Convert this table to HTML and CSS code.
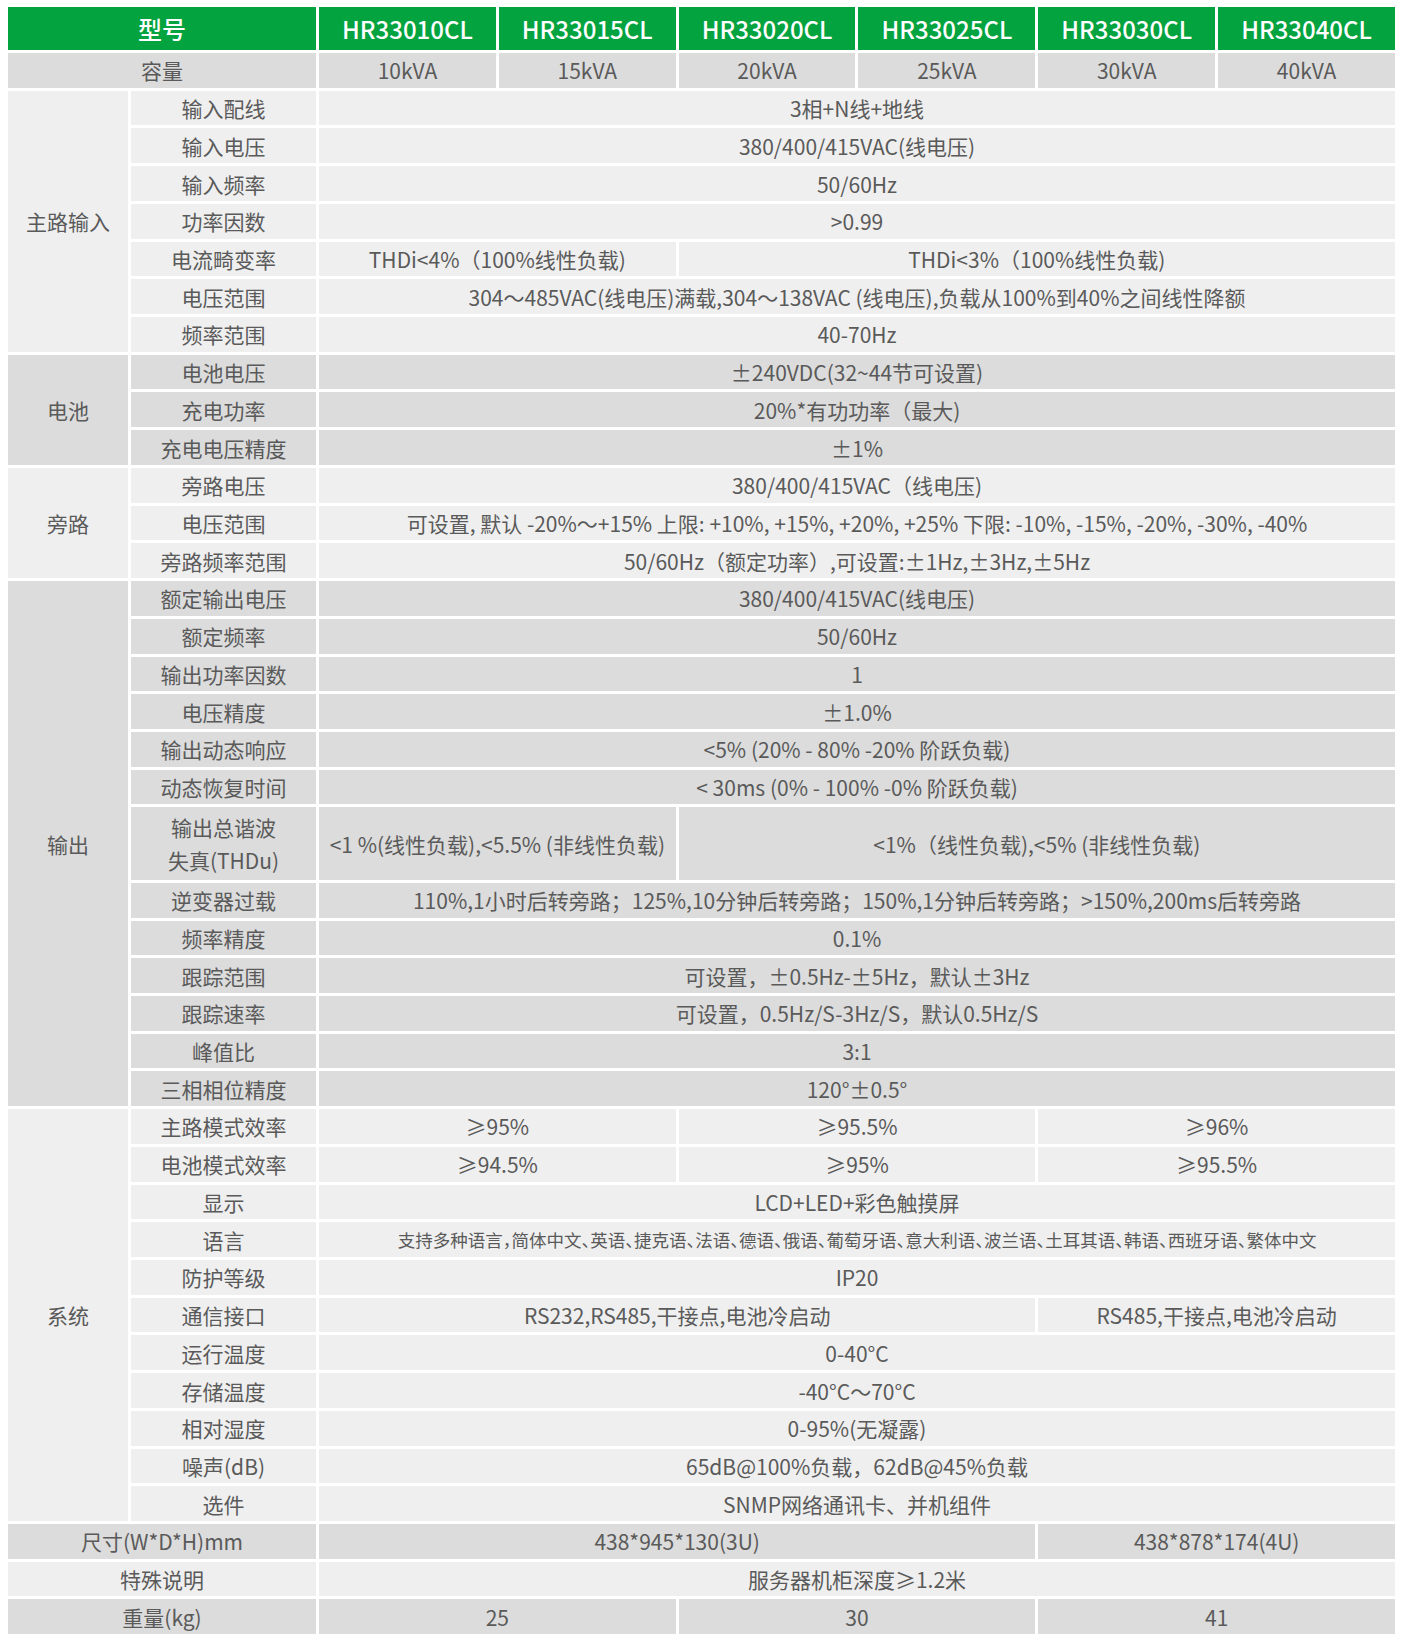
FILE: index.html
```html
<!DOCTYPE html>
<html lang="zh-CN">
<head>
<meta charset="utf-8">
<title>HR330 系列参数</title>
<link rel="stylesheet" href="styles.css">
</head>
<body>
<table class="spec">
  <colgroup>
    <col class="c-group"><col class="c-sub">
    <col class="c-val"><col class="c-val"><col class="c-val"><col class="c-val"><col class="c-val"><col class="c-val">
  </colgroup>
  <thead>
    <tr class="head">
      <th colspan="2">型号</th>
      <th>HR33010CL</th><th>HR33015CL</th><th>HR33020CL</th><th>HR33025CL</th><th>HR33030CL</th><th>HR33040CL</th>
    </tr>
  </thead>
  <tbody>
    <tr class="dark">
      <td colspan="2">容量</td>
      <td>10kVA</td><td>15kVA</td><td>20kVA</td><td>25kVA</td><td>30kVA</td><td>40kVA</td>
    </tr>

    <tr class="light"><td rowspan="7">主路输入</td><td>输入配线</td><td colspan="6">3相+N线+地线</td></tr>
    <tr class="light"><td>输入电压</td><td colspan="6">380/400/415VAC(线电压)</td></tr>
    <tr class="light"><td>输入频率</td><td colspan="6">50/60Hz</td></tr>
    <tr class="light"><td>功率因数</td><td colspan="6">&gt;0.99</td></tr>
    <tr class="light"><td>电流畸变率</td><td colspan="2">THDi&lt;4%（100%线性负载)</td><td colspan="4">THDi&lt;3%（100%线性负载)</td></tr>
    <tr class="light"><td>电压范围</td><td colspan="6">304～485VAC(线电压)满载,304～138VAC (线电压),负载从100%到40%之间线性降额</td></tr>
    <tr class="light"><td>频率范围</td><td colspan="6">40-70Hz</td></tr>

    <tr class="dark"><td rowspan="3">电池</td><td>电池电压</td><td colspan="6">±240VDC(32~44节可设置)</td></tr>
    <tr class="dark"><td>充电功率</td><td colspan="6">20%*有功功率（最大)</td></tr>
    <tr class="dark"><td>充电电压精度</td><td colspan="6">±1%</td></tr>

    <tr class="light"><td rowspan="3">旁路</td><td>旁路电压</td><td colspan="6">380/400/415VAC（线电压)</td></tr>
    <tr class="light"><td>电压范围</td><td colspan="6">可设置, 默认 -20%～+15% 上限: +10%, +15%, +20%, +25% 下限: -10%, -15%, -20%, -30%, -40%</td></tr>
    <tr class="light"><td>旁路频率范围</td><td colspan="6">50/60Hz（额定功率）,可设置:±1Hz,±3Hz,±5Hz</td></tr>

    <tr class="dark"><td rowspan="13">输出</td><td>额定输出电压</td><td colspan="6">380/400/415VAC(线电压)</td></tr>
    <tr class="dark"><td>额定频率</td><td colspan="6">50/60Hz</td></tr>
    <tr class="dark"><td>输出功率因数</td><td colspan="6">1</td></tr>
    <tr class="dark"><td>电压精度</td><td colspan="6">±1.0%</td></tr>
    <tr class="dark"><td>输出动态响应</td><td colspan="6">&lt;5% (20% - 80% -20% 阶跃负载)</td></tr>
    <tr class="dark"><td>动态恢复时间</td><td colspan="6">&lt; 30ms (0% - 100% -0% 阶跃负载)</td></tr>
    <tr class="dark tall"><td class="two">输出总谐波<br>失真(THDu)</td><td colspan="2">&lt;1 %(线性负载),&lt;5.5% (非线性负载)</td><td colspan="4">&lt;1%（线性负载),&lt;5% (非线性负载)</td></tr>
    <tr class="dark"><td>逆变器过载</td><td colspan="6">110%,1小时后转旁路；125%,10分钟后转旁路；150%,1分钟后转旁路；&gt;150%,200ms后转旁路</td></tr>
    <tr class="dark"><td>频率精度</td><td colspan="6">0.1%</td></tr>
    <tr class="dark"><td>跟踪范围</td><td colspan="6">可设置，±0.5Hz-±5Hz，默认±3Hz</td></tr>
    <tr class="dark"><td>跟踪速率</td><td colspan="6">可设置，0.5Hz/S-3Hz/S，默认0.5Hz/S</td></tr>
    <tr class="dark"><td>峰值比</td><td colspan="6">3:1</td></tr>
    <tr class="dark"><td>三相相位精度</td><td colspan="6">120°±0.5°</td></tr>

    <tr class="light"><td rowspan="11">系统</td><td>主路模式效率</td><td colspan="2">≥95%</td><td colspan="2">≥95.5%</td><td colspan="2">≥96%</td></tr>
    <tr class="light"><td>电池模式效率</td><td colspan="2">≥94.5%</td><td colspan="2">≥95%</td><td colspan="2">≥95.5%</td></tr>
    <tr class="light"><td>显示</td><td colspan="6">LCD+LED+彩色触摸屏</td></tr>
    <tr class="light"><td>语言</td><td colspan="6" class="small">支持多种语言，简体中文、英语、捷克语、法语、德语、俄语、葡萄牙语、意大利语、波兰语、土耳其语、韩语、西班牙语、繁体中文</td></tr>
    <tr class="light"><td>防护等级</td><td colspan="6">IP20</td></tr>
    <tr class="light"><td>通信接口</td><td colspan="4">RS232,RS485,干接点,电池冷启动</td><td colspan="2">RS485,干接点,电池冷启动</td></tr>
    <tr class="light"><td>运行温度</td><td colspan="6">0-40°C</td></tr>
    <tr class="light"><td>存储温度</td><td colspan="6">-40°C～70°C</td></tr>
    <tr class="light"><td>相对湿度</td><td colspan="6">0-95%(无凝露)</td></tr>
    <tr class="light"><td>噪声(dB)</td><td colspan="6">65dB@100%负载，62dB@45%负载</td></tr>
    <tr class="light"><td>选件</td><td colspan="6">SNMP网络通讯卡、并机组件</td></tr>

    <tr class="dark"><td colspan="2">尺寸(W*D*H)mm</td><td colspan="4">438*945*130(3U)</td><td colspan="2">438*878*174(4U)</td></tr>
    <tr class="light"><td colspan="2">特殊说明</td><td colspan="6">服务器机柜深度≥1.2米</td></tr>
    <tr class="dark"><td colspan="2">重量(kg)</td><td colspan="2">25</td><td colspan="2">30</td><td colspan="2">41</td></tr>
  </tbody>
</table>
</body>
</html>
```

FILE: styles.css
```css
html, body {
  margin: 0;
  padding: 0;
  background: #ffffff;
}

body {
  font-family: "Noto Sans CJK SC", "Noto Sans", sans-serif;
  color: #5a5a5a;
}

.spec {
  margin: 4px 0 0 5px;
  width: 1393px;
  table-layout: fixed;
  border-collapse: separate;
  border-spacing: 3px;
}

.c-group { width: 120px; }
.c-sub { width: 185px; }
.c-val { width: 176.8px; }

.spec th,
.spec td {
  padding: 0;
  text-align: center;
  vertical-align: middle;
  white-space: nowrap;
  overflow: hidden;
}

.head th {
  background: #03a33f;
  color: #ffffff;
  height: 43px;
  font-size: 24px;
  font-weight: 500;
  line-height: 43px;
}

.spec td {
  height: 34.72px;
  font-size: 21px;
  font-weight: 400;
  line-height: 26px;
}

.dark td { background: #dcdcdc; }
.light td { background: #efefef; }

.tall td { height: 72.44px; }
.spec td.two { line-height: 33px; }

.spec td.small {
  font-size: 17.5px;
  font-feature-settings: "halt";
}
```
